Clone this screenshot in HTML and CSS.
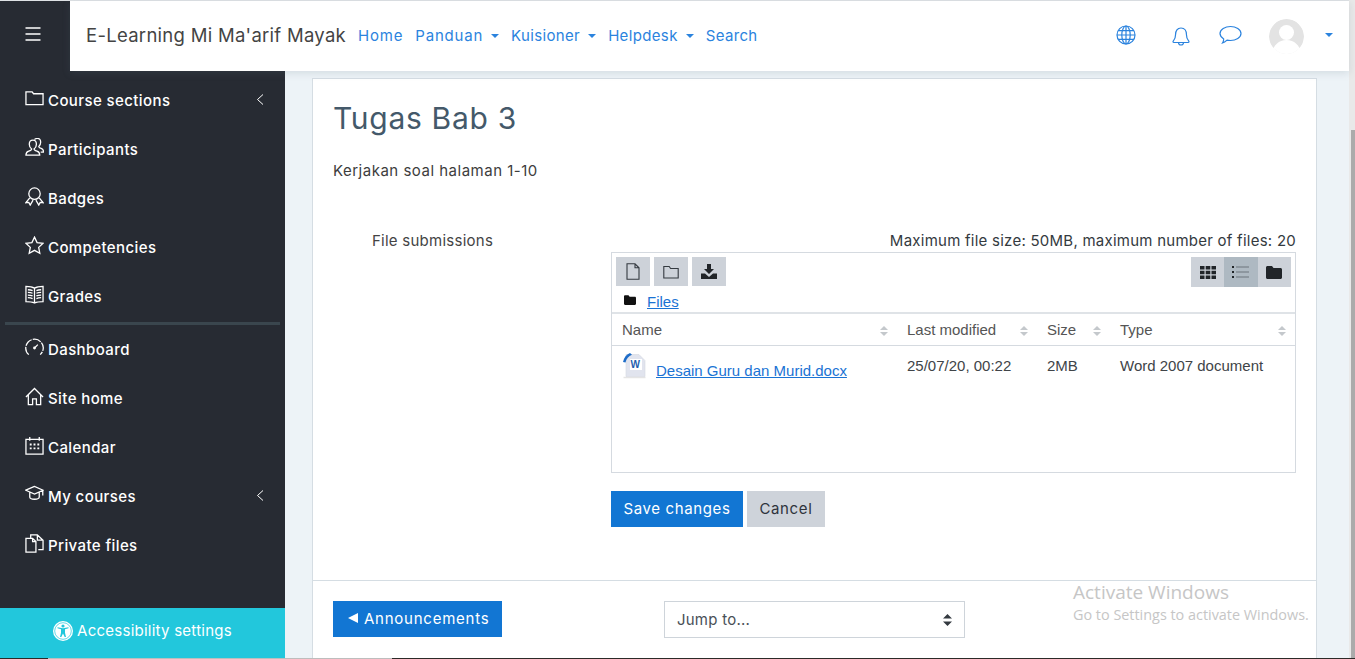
FILE: index.html
```html
<!DOCTYPE html>
<html lang="en">
<head>
    <title>Tugas Bab 3</title>
    <meta charset="utf-8">
    <link rel="stylesheet" href="styles.css">
</head>
<body>
    <div class="page">
        <div class="toggle-cell">
            <svg class="burger" width="16" height="14" viewBox="0 0 16 14"><path d="M0.5 1h15M0.5 7h15M0.5 13h15"/></svg>
        </div>

        <header class="navbar">
            <span class="brand">E-Learning Mi Ma'arif Mayak</span>
            <nav class="nav-links">
                <a class="nav-link wide">Home</a>
                <a class="nav-link caret-link wide">Panduan</a>
                <a class="nav-link caret-link">Kuisioner</a>
                <a class="nav-link caret-link">Helpdesk</a>
                <a class="nav-link">Search</a>
            </nav>
            <div class="nav-icons">
                <svg class="nav-icon globe" width="20" height="20" viewBox="0 0 20 20"><circle cx="10" cy="10" r="9"/><ellipse cx="10" cy="10" rx="4.2" ry="9"/><path d="M10 1v18M1 10h18M2.2 5.6h15.6M2.2 14.4h15.6"/></svg>
                <svg class="nav-icon bell" width="18" height="21" viewBox="0 0 18 21"><path d="M1 16.5c0-1 2.5-1.500 2.500-6.500 0-4 2-7 5.500-7s5.500 3 5.500 7c0 5 2.500 5.500 2.500 6.500 0 .6-.4 1-1 1h-14c-.6 0-1-.4-1-1zM6.500 17.500a2.500 2.500 0 0 0 5 0"/></svg>
                <svg class="nav-icon bubble" width="23" height="20" viewBox="0 0 23 20"><path d="M11.500 1.500c5.500 0 10.500 3 10.500 7s-5 7-10.500 7c-1.200 0-2.400-.1-3.500-.4-1.300 1.200-2.800 2.400-4.500 2.900.8-1.200 1.200-2.500 1.200-4C2.800 12.700 1 10.800 1 8.500c0-4 5-7 10.500-7z"/></svg>
                <div class="avatar">
                    <svg width="35" height="35" viewBox="0 0 35 35"><circle cx="17.500" cy="17.500" r="17.500" fill="#e3e3e3"/><circle cx="17.500" cy="13.500" r="7.500" fill="#fff"/><path d="M3 35c1-9 7-14 14.500-14S31 26 32 35z" fill="#fff"/></svg>
                </div>
                <span class="caret user-caret"></span>
            </div>
        </header>

        <div class="scrollbar"><div class="scroll-thumb"></div></div>

        <aside class="sidebar">
            <div class="side-group">
                <a class="side-item">
                    <svg class="side-icon" viewBox="0 0 20 20"><path d="M1 3h6.500l1.500 2h10v11.500H1z"/></svg>
                    <span>Course sections</span>
                    <svg class="chevron" width="8" height="11" viewBox="0 0 8 11"><path d="M7 .5 1.500 5.500 7 10.500"/></svg>
                </a>
                <a class="side-item">
                    <svg class="side-icon" viewBox="0 0 20 20"><path d="M1 18c0-2.800 1-3.800 3-4.300 2-.5 3-1.200 3-2.200-1.500-1-2.500-3-2.500-5 0-2.700 1.800-4.300 3.800-4.300s3.700 1.600 3.700 4.300c0 2-1 4-2.500 5 0 1 1 1.700 3 2.200 2 .5 3 1.500 3 4.300z"/><path d="M10 1.500c1-1 2-1 3-1 2 0 3.500 1.500 3.500 4 0 2-.8 3.500-2 4.500 0 1 .8 1.500 2.500 2 1.500.5 2.500 1.500 2.500 3.800h-3"/></svg>
                    <span>Participants</span>
                </a>
                <a class="side-item">
                    <svg class="side-icon" viewBox="0 0 20 20"><circle cx="10" cy="7" r="6"/><path d="M5 11.500 1 16.500l3-.3 1.500 2.800 3-5.200M15 11.500l4 5-3-.3-1.500 2.800-3-5.200"/></svg>
                    <span>Badges</span>
                </a>
                <a class="side-item">
                    <svg class="side-icon" viewBox="0 0 20 20"><path d="M10 1.200l2.700 5.700 6.300.8-4.600 4.300 1.200 6.200-5.600-3.100-5.600 3.100 1.200-6.200L1 7.700l6.300-.8z"/></svg>
                    <span>Competencies</span>
                </a>
                <a class="side-item">
                    <svg class="side-icon" viewBox="0 0 20 20"><path d="M1 1.500c3.500 0 6.500.3 9 1.800 2.500-1.500 5.500-1.800 9-1.800v16c-3.500 0-6.500.2-9 1.500-2.500-1.300-5.500-1.500-9-1.500zM10 3.300V19M3 5c1.800 0 3.500.2 5 .9M3 7.800c1.800 0 3.500.2 5 .9M3 10.600c1.800 0 3.500.2 5 .9M3 13.400c1.800 0 3.500.2 5 .9M17 5c-1.800 0-3.500.2-5 .9M17 7.800c-1.800 0-3.500.2-5 .9M17 10.600c-1.800 0-3.500.2-5 .9M17 13.400c-1.800 0-3.500.2-5 .9"/></svg>
                    <span>Grades</span>
                </a>
            </div>
            <div class="side-rule"></div>
            <div class="side-group">
                <a class="side-item">
                    <svg class="side-icon" viewBox="0 0 20 20"><path d="M4 17.500a9.200 9.200 0 1 1 12 0" stroke-dasharray="9 1.200"/><path d="M10 10.500l3.500-3.500"/><circle cx="10" cy="10.500" r=".8"/></svg>
                    <span>Dashboard</span>
                </a>
                <a class="side-item">
                    <svg class="side-icon" viewBox="0 0 20 20"><path d="M1 10.500 10 1.500l9 9M3.500 8.500V18.500H8v-6h4v6h4.500V8.500"/></svg>
                    <span>Site home</span>
                </a>
                <a class="side-item">
                    <svg class="side-icon" viewBox="0 0 20 20"><path d="M1 3.500h18v15.500H1zM5 1v4M15 1v4"/><path class="dots" d="M5 8h2v2H5zM9 8h2v2H9zM13 8h2v2h-2zM5 12h2v2H5zM9 12h2v2H9zM13 12h2v2h-2z"/></svg>
                    <span>Calendar</span>
                </a>
                <a class="side-item">
                    <svg class="side-icon" viewBox="0 0 20 20"><path d="M10 1.500 .8 5.500 10 9.500l9-4zM5 7.700v5c0 1.300 2.500 2.300 5 2.300s5-1 5-2.300v-5M18.700 6v5"/></svg>
                    <span>My courses</span>
                    <svg class="chevron" width="8" height="11" viewBox="0 0 8 11"><path d="M7 .5 1.500 5.500 7 10.500"/></svg>
                </a>
                <a class="side-item">
                    <svg class="side-icon" viewBox="0 0 20 20"><path d="M1 4.500h7l3.500 3.500v11H1zM8 4.500V8h3.500M6 4V1h7l6 5.500v10h-5M13 1v5.500h6"/></svg>
                    <span>Private files</span>
                </a>
            </div>
            <a class="access-bar">
                <svg width="20" height="20" viewBox="0 0 20 20"><circle cx="10" cy="10" r="10" fill="#fff"/><circle cx="10" cy="10" r="8.300" fill="none" stroke="#22c7dc" stroke-width=".7"/><circle cx="10" cy="5" r="1.600" fill="#22c7dc"/><path d="M4.500 7.200 8 8.200v3.600L7 16h1.300l1.700-3.600 1.700 3.600H13l-1-4.200V8.200l3.500-1v-.9L10 7.300 4.500 6.300z" fill="#22c7dc"/></svg>
                <span>Accessibility settings</span>
            </a>
        </aside>

        <main class="main">
            <section class="card">
                <div class="card-body">
                    <h2 class="title">Tugas Bab 3</h2>
                    <p class="intro">Kerjakan soal halaman 1-10</p>

                    <div class="form-row">
                        <div class="form-label">File submissions</div>
                        <div class="form-field">
                            <div class="limits">Maximum file size: 50MB, maximum number of files: 20</div>
                            <div class="picker">
                                <div class="picker-tools">
                                    <div class="tool-group">
                                        <span class="tool">
                                            <svg class="tool-line" width="14" height="17" viewBox="0 0 14 17"><path d="M1 .8h8l4 4v11.400H1zM9 .8v4h4"/></svg>
                                        </span>
                                        <span class="tool">
                                            <svg class="tool-line" width="16" height="14" viewBox="0 0 16 14"><path d="M.8 1.500h5.400l1.400 2h7.600v9.500H.8z"/></svg>
                                        </span>
                                        <span class="tool">
                                            <svg width="16" height="15" viewBox="0 0 16 15" fill="#212529"><path d="M6 0h4v5h3L8 10 3 5h3z"/><path d="M0 9.500h4L8 13l4-3.500h4V15H0z"/></svg>
                                        </span>
                                    </div>
                                    <div class="view-group">
                                        <span class="view">
                                            <svg width="16" height="13" viewBox="0 0 16 13" fill="#212529"><path d="M0 0h4.500v3.500H0zM5.700 0h4.600v3.500H5.700zM11.500 0H16v3.500h-4.500zM0 4.700h4.500v3.600H0zM5.700 4.700h4.600v3.600H5.700zM11.500 4.700H16v3.600h-4.500zM0 9.500h4.500V13H0zM5.700 9.500h4.600V13H5.700zM11.500 9.500H16V13h-4.500z"/></svg>
                                        </span>
                                        <span class="view view-on">
                                            <svg width="17" height="12" viewBox="0 0 17 12"><path fill="#212529" d="M0 0h2v2H0zM0 5h2v2H0zM0 10h2v2H0z"/><path stroke="#6c757d" fill="none" d="M4 1h13M4 6h13M4 11h13"/></svg>
                                        </span>
                                        <span class="view">
                                            <svg width="16" height="13" viewBox="0 0 16 13" fill="#212529"><path d="M1.500 0h4.500l1.500 2h7c.8 0 1.500.7 1.500 1.500V11.500c0 .8-.7 1.500-1.500 1.500h-13C.7 13 0 12.300 0 11.500v-10C0 .7.700 0 1.500 0z"/></svg>
                                        </span>
                                    </div>
                                </div>
                                <div class="picker-path">
                                    <svg class="path-folder" width="12" height="10" viewBox="0 0 16 13" fill="#111"><path d="M1.500 0h4.500l1.500 2h7c.8 0 1.500.7 1.500 1.500V11.500c0 .8-.7 1.500-1.500 1.500h-13C.7 13 0 12.300 0 11.500v-10C0 .7.700 0 1.500 0z"/></svg>
                                    <a class="file-link">Files</a>
                                </div>
                                <div class="file-head">
                                    <div class="file-col">Name<span class="sort"></span></div>
                                    <div class="file-col">Last modified<span class="sort"></span></div>
                                    <div class="file-col">Size<span class="sort"></span></div>
                                    <div class="file-col">Type<span class="sort"></span></div>
                                </div>
                                <div class="file-row">
                                    <div class="file-name">
                                        <svg class="doc-icon" width="24" height="26" viewBox="0 0 24 26">
                                            <path d="M1.500 24.500h22" stroke="#e4e4e4" stroke-width="1.500"/>
                                            <path d="M4 1.500h13l6 6v16H4z" fill="#e1e4ee" stroke="#d5d8e0" stroke-width=".6"/>
                                            <path d="M1 9C2 4.500 4 2 8 0l2 1.700C6.500 3 4.500 5.500 3.500 9.500z" fill="#1d6cc8"/>
                                            <rect x="8" y="6" width="12" height="11" fill="#fff"/>
                                            <text x="8.500" y="15" class="doc-letter">W</text>
                                        </svg>
                                        <a class="file-link">Desain Guru dan Murid.docx</a>
                                    </div>
                                    <div class="file-cell">25/07/20, 00:22</div>
                                    <div class="file-cell">2MB</div>
                                    <div class="file-cell">Word 2007 document</div>
                                </div>
                            </div>
                            <div class="form-actions">
                                <button class="btn btn-primary">Save changes</button>
                                <button class="btn btn-plain">Cancel</button>
                            </div>
                        </div>
                    </div>
                </div>
                <div class="card-foot">
                    <a class="btn btn-primary prev-link"><span class="prev-arrow"></span>Announcements</a>
                    <div class="jump">Jump to...
                        <svg width="9" height="12" viewBox="0 0 9 12" fill="#343a40"><path d="M4.500 0 9 4.500H0zM4.500 12 0 7.500h9z"/></svg>
                    </div>
                </div>
            </section>
        </main>

        <div class="bottom-strip"><span class="strip-gap"></span></div>
    </div>

    <div class="watermark">
        <div class="wm-big">Activate Windows</div>
        <div class="wm-small">Go to Settings to activate Windows.</div>
    </div>
</body>
</html>
```

FILE: styles.css
```css
html, body {
    height: 100%;
    margin: 0;
    padding: 0;
    overflow: hidden;
}

body {
    font-family: Inter, "Noto Sans", sans-serif;
    font-size: 15px;
    letter-spacing: .25px;
    color: #343a40;
    background: #edf3f7;
}

a {
    text-decoration: none;
}

.page {
    height: 100%;
    display: grid;
    grid-template-columns: 70px 215px 1fr 6px;
    grid-template-rows: 1px 70px 1fr 1px;
    background: #dfe2e5;
}

/* top row */
.toggle-cell {
    grid-column: 1;
    grid-row: 2;
    background: #272b33;
    display: flex;
    align-items: center;
    justify-content: center;
    padding: 0 5px 4px 0;
}

.burger {
    fill: none;
    stroke: #fff;
    stroke-width: 1.4;
}

.navbar {
    grid-column: 2 / 4;
    grid-row: 2;
    background: #fff;
    display: flex;
    align-items: center;
    padding: 0 0 2px 16px;
    z-index: 2;
    box-shadow: 0 2px 8px rgba(90, 110, 125, .18);
}

.brand {
    font-size: 18.500px;
    color: #444;
    letter-spacing: .28px;
    margin-right: 12px;
}

.nav-links {
    display: flex;
    gap: 12px;
}

.nav-link {
    color: #2b83de;
    font-size: 15px;
    letter-spacing: .35px;
}

.nav-link.wide {
    letter-spacing: .8px;
}

.caret-link::after {
    content: "";
    display: inline-block;
    margin-left: 8px;
    vertical-align: 3px;
    border-top: 4px solid #2b83de;
    border-left: 4.500px solid transparent;
    border-right: 4.500px solid transparent;
}

.nav-icons {
    margin-left: auto;
    display: flex;
    align-items: center;
    padding-right: 16px;
}

.nav-icon {
    fill: none;
    stroke: #2b83de;
    stroke-width: 1.200;
}

.globe {
    margin-right: 36px;
}

.bell {
    margin-right: 29px;
}

.bubble {
    margin-right: 27px;
}

.avatar {
    height: 35px;
    width: 35px;
    margin: 2px 21px 0 0;
    overflow: hidden;
    border-radius: 50%;
}

.user-caret {
    display: block;
    border-top: 4px solid #2b83de;
    border-left: 4.500px solid transparent;
    border-right: 4.500px solid transparent;
}

.scrollbar {
    grid-column: 4;
    grid-row: 1 / 4;
    background: #e9e9e9;
    padding-top: 130px;
    display: flex;
    justify-content: flex-end;
}

.scroll-thumb {
    width: 4px;
    height: 100%;
    background: #ababab;
}

/* sidebar */
.sidebar {
    grid-column: 1 / 3;
    grid-row: 3;
    background: #272b33;
    display: flex;
    flex-direction: column;
    padding-top: 5px;
    min-height: 0;
}

.side-item {
    height: 49px;
    display: flex;
    align-items: center;
    color: #fff;
    font-weight: 500;
    letter-spacing: .4px;
    padding-left: 25px;
    gap: 4px;
}

.side-icon {
    width: 19px;
    height: 19px;
    margin-top: -4px;
    fill: none;
    stroke: #fff;
    stroke-width: 1.350;
    flex: none;
}

.side-icon .dots {
    fill: #fff;
    stroke: none;
}

.chevron {
    margin-left: auto;
    margin-right: 21px;
    margin-top: -2px;
    fill: none;
    stroke: #fff;
    stroke-width: 1;
}

.side-rule {
    height: 3px;
    margin: 1px 5px 0;
    background: #3a464e;
}

.access-bar {
    margin-top: auto;
    height: 50px;
    box-sizing: border-box;
    background: #22c7dc;
    color: #fff;
    display: flex;
    align-items: center;
    justify-content: center;
    gap: 4px;
    padding: 0 0 5px 0;
    letter-spacing: .25px;
}

/* main column */
.main {
    grid-column: 3;
    grid-row: 3;
    min-height: 0;
    overflow: hidden;
    padding: 7px 32px 0 27px;
    background: #edf3f7;
}

.card {
    background: #fff;
    border: 1px solid #d5dde3;
    border-bottom: 0;
    height: 620px;
}

.card-body {
    padding: 20px 20px 0;
    height: 501px;
    box-sizing: border-box;
}

.title {
    margin: 0;
    font-size: 30px;
    font-weight: 400;
    letter-spacing: .7px;
    line-height: 38px;
    color: #44596a;
}

.intro {
    margin: 23px 0 0;
    letter-spacing: .5px;
    line-height: 22px;
    color: #3d3d3d;
}

.form-row {
    display: grid;
    grid-template-columns: 278px 1fr;
    margin-top: 48px;
}

.form-label {
    padding-left: 39px;
    line-height: 22px;
    color: #444;
}

.limits {
    text-align: right;
    line-height: 22px;
    color: #343a40;
}

.picker {
    height: 221px;
    box-sizing: border-box;
    border: 1px solid #d5dae0;
    font-family: "Liberation Sans", Arial, sans-serif;
    font-size: 15px;
    letter-spacing: 0;
}

.picker-tools {
    display: flex;
    justify-content: space-between;
    padding: 4px 4px 0;
}

.tool-group {
    display: flex;
    gap: 4px;
}

.tool {
    width: 34px;
    height: 29px;
    background: #cdd2d9;
    display: flex;
    align-items: center;
    justify-content: center;
}

.tool-line {
    fill: none;
    stroke: #343a40;
    stroke-width: 1.100;
}

.view-group {
    display: flex;
}

.view {
    width: 33.400px;
    height: 30px;
    background: #cdd2d9;
    display: flex;
    align-items: center;
    justify-content: center;
}

.view-on {
    background: #aeb9c2;
}

.picker-path {
    height: 27px;
    display: flex;
    align-items: center;
    gap: 11px;
    padding: 3px 0 0 12px;
    border-bottom: 2px solid #dfe3e7;
    box-sizing: border-box;
}

.path-folder {
    margin-top: -3px;
}

.file-link {
    color: #1a73d4;
    text-decoration: underline;
}

.file-head,
.file-row {
    display: grid;
    grid-template-columns: 285px 140px 73px 1fr;
}

.file-head {
    height: 31px;
    align-items: center;
    border-bottom: 1px solid #d5dae0;
    color: #555;
}

.file-col {
    display: flex;
    align-items: center;
    justify-content: space-between;
    padding: 0 10px;
}

.sort {
    display: flex;
    flex-direction: column;
    gap: 2px;
    margin: 2px -1px 0 0;
}

.sort::before,
.sort::after {
    content: "";
    display: block;
    border-left: 4px solid transparent;
    border-right: 4px solid transparent;
}

.sort::before {
    border-bottom: 4px solid #c4c8cc;
}

.sort::after {
    border-top: 4px solid #c4c8cc;
}

.file-row {
    padding-top: 7px;
    color: #404448;
}

.file-name {
    display: flex;
    align-items: flex-start;
    padding-left: 10px;
    gap: 10px;
}

.file-name .file-link {
    margin-top: 9px;
}

.doc-letter {
    font-family: "Liberation Sans", Arial, sans-serif;
    font-size: 10px;
    font-weight: 700;
    fill: #1f5fae;
}

.file-cell {
    padding: 4px 10px 0;
}

.form-actions {
    display: flex;
    gap: 4px;
    margin-top: 18px;
}

.btn {
    height: 36px;
    box-sizing: border-box;
    border: 0;
    padding: 0 12.500px 2px;
    font-family: inherit;
    font-size: 15px;
    letter-spacing: .62px;
    display: inline-flex;
    align-items: center;
}

.btn-primary {
    background: #1276d3;
    color: #fff;
}

.btn-plain {
    background: #ced3da;
    color: #2f343c;
}

.card-foot {
    border-top: 1px solid #d5dde3;
    padding: 20px 20px 0;
    box-sizing: border-box;
    display: flex;
    align-items: flex-start;
    gap: 162px;
}

.prev-arrow {
    display: inline-block;
    margin-right: 6px;
    border-right: 10px solid #fff;
    border-top: 5px solid transparent;
    border-bottom: 5px solid transparent;
}

.prev-link {
    padding: 0 12.500px 2px 15px;
    letter-spacing: .76px;
}

.jump {
    width: 301px;
    height: 37px;
    box-sizing: border-box;
    border: 1px solid #ced4da;
    padding: 0 12px;
    display: flex;
    align-items: center;
    justify-content: space-between;
    color: #495057;
    background: #fff;
}

.bottom-strip {
    grid-column: 1 / 5;
    grid-row: 4;
    background: #2c2a28;
    padding-left: 48px;
}

.strip-gap {
    display: block;
    width: 344px;
    height: 1px;
    background: #bdbdbd;
}

/* the OS watermark sits over the page */
.watermark {
    position: absolute;
    left: 1073px;
    top: 580px;
    font-family: "Open Sans", sans-serif;
    letter-spacing: 0;
    color: #c6c6c6;
}

.wm-big {
    font-size: 19px;
    line-height: 25px;
}

.wm-small {
    font-size: 14.400px;
    line-height: 20px;
}
```
